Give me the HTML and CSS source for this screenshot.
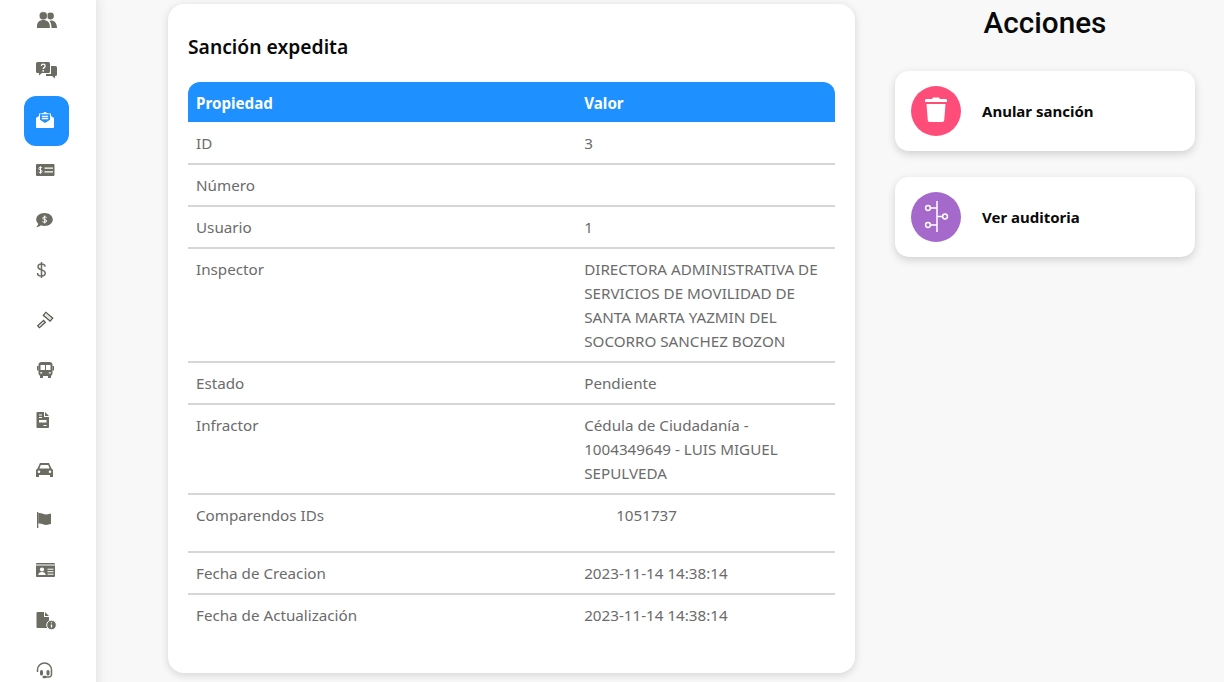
FILE: index.html
```html
<!DOCTYPE html>
<html lang="es">
<head>
<meta charset="utf-8">
<title>Sanción expedita</title>
<link rel="stylesheet" href="styles.css">
</head>
<body>
<div class="app">
  <nav class="sidebar">
    <a class="nav-item"><svg class="ico" viewBox="0 0 22 20"><circle cx="14.5" cy="6" r="3.4"/><path d="M15 10.5c3.5 0 6 2.5 6 7.5h-5.5c0-3-.5-5.5-2-7z"/><circle cx="7.3" cy="5.8" r="4.1" stroke="#fff" stroke-width=".6"/><path d="M1 18v-2c0-4 3-6 6.3-6s6.5 2 6.5 6v2z"/></svg></a>
    <a class="nav-item"><svg class="ico" viewBox="0 0 22 20"><path d="M15 6h4.500A1.500 1.500 0 0 1 21 7.500v7a1.500 1.500 0 0 1-1.500 1.500H19v2.500L16 16h-6v-2h5z"/><path d="M1.500 2h11A1.500 1.500 0 0 1 14 3.500v8a1.500 1.500 0 0 1-1.500 1.500H6l-3 2.500V13H1.500A1.500 1.500 0 0 1 0 11.500v-8A1.500 1.500 0 0 1 1.500 2z"/><path class="w" d="M5.300 6c.2-2.400 3.800-2.400 3.800 0 0 1.700-1.900 1.500-1.900 3"/><circle class="wf" cx="7.200" cy="10.800" r=".9"/></svg></a>
    <a class="nav-item active"><svg class="ico" viewBox="0 0 22 20"><path class="wf" d="M9 1.800 18 8v9a1 1 0 0 1-1 1H1a1 1 0 0 1-1-1V8z"/><path class="wf" d="M3 3.500h12V9H3z"/><path class="bf" d="M4 4.200h10v5.500L9 13 4 9.700z"/><path class="w" d="M5.800 6.400h6.400M5.800 8.500h6.400"/></svg></a>
    <a class="nav-item"><svg class="ico" viewBox="0 0 22 20"><rect y="4" width="18.500" height="12" rx="1"/><path class="w" d="M8.500 8.200h8.500M8.500 11.800h8.500"/><path class="w thin" d="M6 7.900c-1-1-3.200-.8-3.200.7 0 1.700 3.300 1 3.300 2.800 0 1.500-2.300 1.600-3.400.7M4.500 6.300v7.400"/></svg></a>
    <a class="nav-item"><svg class="ico" viewBox="0 0 22 20"><path d="M8.500 3c4.600 0 8.300 2.900 8.300 6.500S13.100 16 8.500 16c-1.300 0-2.500-.2-3.500-.7C3.900 16.200 2 17.300 0 17.300c1.200-1 2-2.400 2.200-3.600C1 12.500.2 11.100.2 9.500.2 5.900 3.900 3 8.500 3z"/><path class="w thin" d="M10.600 7.600c-.8-.9-3.900-1-3.900.6s4 1 4 2.800c0 1.500-3 1.600-4.300.5M8.700 5.500v8"/></svg></a>
    <a class="nav-item"><svg class="ico" viewBox="0 0 22 20"><path class="dk" d="M9 6.800C9 4.700 7.200 3.900 5.500 3.900S2 4.800 2 6.800c0 2 1.800 2.600 3.500 3.100s3.700 1.100 3.700 3.200c0 2-1.800 3-3.700 3s-4-1-4-3.100M5.500 2v16"/></svg></a>
    <a class="nav-item"><svg class="ico" viewBox="0 0 22 20"><rect class="gavel" x="7.500" y="4.700" width="9" height="4" transform="rotate(40 12 6.700)"/><rect class="gavel" x="1.500" y="12.800" width="8" height="2.600" transform="rotate(-42 5.500 14.100)"/></svg></a>
    <a class="nav-item"><svg class="ico" viewBox="0 0 22 20"><path d="M1 6h1.500v4.500H1zM16.500 6H18v4.500h-1.500zM4 15h3v3H4zM12 15h3v3h-3z"/><rect x="2.500" y="2" width="14" height="14" rx="3"/><path class="wf" d="M4.500 5h4.500v5H4.500zM10 5h4.500v5H10zM4.200 12.300h2v1.200h-2zM12.800 12.300h2v1.200h-2z"/></svg></a>
    <a class="nav-item"><svg class="ico" viewBox="0 0 22 20"><path d="M1.500 2h6.500v5h5v10a1 1 0 0 1-1 1H1.500a1 1 0 0 1-1-1V3a1 1 0 0 1 1-1zM9 2l4 4H9z"/><path class="wf" d="M3 4.500h3v1H3zM3 7h3v1H3zM3 10h7.500v2.500H3zM7.500 15h3v1h-3z"/></svg></a>
    <a class="nav-item"><svg class="ico" viewBox="0 0 22 20"><path d="M4 3h9l2.500 5.500c1 .5 1.500 1.500 1.500 2.500v6h-3v-2H3v2H0v-6c0-1 .5-2 1.500-2.500z"/><path class="wf" d="M4.800 5h7.400l1.400 3.500H3.400z"/><circle class="wf" cx="3" cy="11.700" r="1.300"/><circle class="wf" cx="14" cy="11.700" r="1.300"/></svg></a>
    <a class="nav-item"><svg class="ico" viewBox="0 0 22 20"><path d="M1 2h1.300v16H1z"/><path d="M2.300 3c3.200-.6 5.500 1.700 8.200 1.500 1.600-.1 3-.5 4.500-.9v10.200c-1.800.8-3.300 1.100-4.700 1.100-2.800 0-4.800-1.800-8-1.300z"/></svg></a>
    <a class="nav-item"><svg class="ico" viewBox="0 0 22 20"><rect y="3" width="19" height="14" rx="1"/><path class="w thin" d="M0 5h19M11.500 9.200h6M11.500 11.700h6M11.500 14.200h6"/><circle class="wf" cx="6" cy="9.500" r="2.100"/><path class="wf" d="M2.300 15c0-2 1.700-3 3.700-3s3.700 1 3.700 3z"/></svg></a>
    <a class="nav-item"><svg class="ico" viewBox="0 0 22 20"><path d="M1.500 2H8v5h5v10a1 1 0 0 1-1 1H1.500a1 1 0 0 1-1-1V3a1 1 0 0 1 1-1zM9 2l4 4H9z"/><circle cx="15.500" cy="15" r="4.800" stroke="#fff"/><path class="w" d="M15.500 14.500v3M15.500 12.200v1"/></svg></a>
    <a class="nav-item"><svg class="ico" viewBox="0 0 22 20"><path class="dk" d="M1.500 12V10a7 7 0 0 1 14 0v2M15.500 12v2.500a2.500 2.500 0 0 1-2.500 2.500H9"/><rect x="4" y="10" width="3" height="5.500" rx="1.500"/><rect x="10.500" y="10" width="3" height="5.500" rx="1.500"/><rect x="6.500" y="15.800" width="4" height="2.400" rx="1.200"/></svg></a>
  </nav>
  <main class="content">
    <section class="panel">
      <h2 class="panel-title">Sanción expedita</h2>
      <table class="props">
        <thead>
          <tr><th class="col-prop">Propiedad</th><th>Valor</th></tr>
        </thead>
        <tbody>
          <tr><td>ID</td><td>3</td></tr>
          <tr><td>Número</td><td></td></tr>
          <tr><td>Usuario</td><td>1</td></tr>
          <tr><td>Inspector</td><td>DIRECTORA ADMINISTRATIVA DE SERVICIOS DE MOVILIDAD DE SANTA MARTA YAZMIN DEL SOCORRO SANCHEZ BOZON</td></tr>
          <tr><td>Estado</td><td>Pendiente</td></tr>
          <tr><td>Infractor</td><td>Cédula de Ciudadanía - 1004349649 - LUIS MIGUEL SEPULVEDA</td></tr>
          <tr><td>Comparendos IDs</td><td><ul class="ids"><li>1051737</li></ul></td></tr>
          <tr><td>Fecha de Creacion</td><td>2023-11-14 14:38:14</td></tr>
          <tr><td>Fecha de Actualización</td><td>2023-11-14 14:38:14</td></tr>
        </tbody>
      </table>
    </section>
    <aside class="actions">
      <h1 class="actions-title">Acciones</h1>
      <a class="action">
        <span class="action-icon pink"><svg class="action-svg" viewBox="0 0 50 50"><path class="wf" d="M14 14.500c0-1 .5-1.500 1.500-1.500H21l1-1.500h6l1 1.500h5.500c1 0 1.500.5 1.500 1.500v1.500H14z"/><path class="wf" d="M15.500 18h19l-1.300 16.300c-.1 1-.9 1.700-1.900 1.700H18.700c-1 0-1.800-.7-1.900-1.700z"/></svg></span>
        <span class="action-label">Anular sanción</span>
      </a>
      <a class="action">
        <span class="action-icon purple"><svg class="action-svg" viewBox="0 0 50 50"><path class="line" d="M26 9v31M19.500 16H26M19.500 33H26M26 24.500h5"/><circle class="node" cx="17" cy="16" r="2.400"/><circle class="node" cx="17" cy="33" r="2.400"/><circle class="node" cx="34" cy="24.500" r="2.400"/></svg></span>
        <span class="action-label">Ver auditoria</span>
      </a>
    </aside>
  </main>
</div>
</body>
</html>
```
FILE: styles.css
```css
* { box-sizing: border-box; }
html, body { margin: 0; height: 100%; overflow: hidden; }
body { background: #f8f8f8; font-family: "Noto Sans", "Open Sans", sans-serif; color: #6b6b6b; }
.app { display: flex; height: 682px; overflow: hidden; }

.sidebar { width: 96px; flex: none; background: #fff; box-shadow: 0 0 12px rgba(0,0,0,.12); margin-top: -4px; height: 700px; display: flex; flex-direction: column; padding-left: 24px; }
.nav-item { flex: none; width: 45px; height: 50px; padding-left: 12px; display: flex; align-items: center; border-radius: 12px; }
.nav-item.active { background: #1e90ff; }
.ico { width: 22px; height: 20px; margin-top: -2px; display: block; fill: #6c6c63; overflow: visible; }
.ico .w { fill: none; stroke: #fff; stroke-width: 1.3; }
.ico .thin { stroke-width: 1; }
.ico .wf { fill: #fff; }
.ico .bf { fill: #1e90ff; }
.ico .dk { fill: none; stroke: #6c6c63; stroke-width: 1.5; }
.ico .gavel { fill: #e4e4e0; stroke: #55554c; stroke-width: 1.2; }

.content { flex: 1; display: flex; align-items: flex-start; gap: 40px; padding: 4px 0 0 72px; }
.panel { width: 687px; height: 669px; flex: none; background: #fff; border-radius: 16px; padding: 20px; box-shadow: 0 2px 8px rgba(0,0,0,.15); }
.panel-title { margin: 10px 0 23px; font-size: 19.300px; line-height: 25px; font-weight: 600; color: #0a0a0a; }
.props { width: 100%; border-collapse: separate; border-spacing: 0; font-size: 15.200px; line-height: 24px; table-layout: fixed; }
.props th { background: #1e90ff; background-clip: padding-box; color: #fff; text-align: left; font-weight: 700; height: 41px; padding: 1px 8px 0; border-bottom: 1px solid #fff; }
.props th.col-prop { width: 60%; border-top-left-radius: 12px; }
.props th:last-child { border-top-right-radius: 12px; }
.props td { padding: 8px 8px; vertical-align: top; border-bottom: 2px solid #d6d6d6; }
.props tr:last-child td { border-bottom: 0; }
.ids { margin: 0 0 16px; padding: 0 0 0 32px; list-style: none; }

.actions { width: 300px; flex: none; }
.actions-title { margin: 0 0 30px; height: 37px; font: 500 29.700px/37px Roboto, sans-serif; color: #0a0a0a; text-align: center; }
.action { display: flex; align-items: center; height: 80px; margin-bottom: 26px; padding-left: 16px; background: #fff; border-radius: 14px; box-shadow: 0 3px 8px rgba(0,0,0,.16); }
.action-icon { width: 50px; height: 50px; flex: none; border-radius: 50%; display: block; }
.pink { background: #ff4d7a; }
.purple { background: #a569cc; }
.action-svg { width: 50px; height: 50px; display: block; }
.action-svg .wf { fill: #fff; }
.line { fill: none; stroke: #fff; stroke-width: 1.5; }
.node { fill: none; stroke: #fff; stroke-width: 1.5; }
.action-label { margin-left: 21px; font-size: 15px; font-weight: 700; color: #0a0a0a; }
```
